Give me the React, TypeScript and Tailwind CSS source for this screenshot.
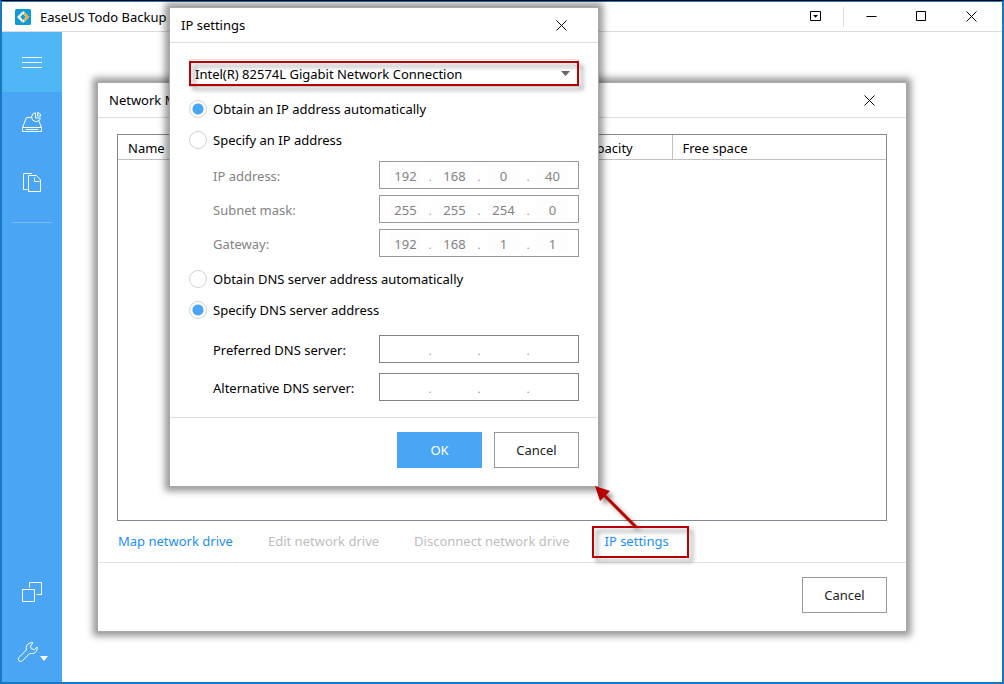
import type { ReactNode } from "react"
import clsx from "clsx"

function CloseIcon() {
  return (
    <svg className="h-[11px] w-[11px]" viewBox="0 0 11 11" fill="none" stroke="currentColor">
      <path d="M.5 .5l10 10M10.5 .5l-10 10" />
    </svg>
  )
}

function Logo() {
  return (
    <svg className="h-4 w-4" viewBox="0 0 16 16">
      <rect width="16" height="16" rx="1.5" fill="#0e9bd2" />
      <path d="M7.500 2.500L2 8l5.500 5.500V10.300L5.200 8l2.300-2.300z" fill="#fff" />
      <path d="M7.500 2.500L9 2.500 14 8l-5 5.500H7.500L7.500 11.500 11 8 7.500 4.500z" fill="#fff" />
      <path d="M9 3L14 8l-5 5v-2.800L11.200 8 9 5.800z" fill="#f6a623" />
    </svg>
  )
}

function WindowButton({ label, className, children }: { label: string; className?: string; children: ReactNode }) {
  return (
    <button type="button" aria-label={label} className={clsx("flex h-full items-center justify-center", className)}>
      {children}
    </button>
  )
}

function TitleBar() {
  return (
    <header className="flex h-[31px] items-center border-t border-b border-t-[#1c7cc9] border-b-[#dcdcdc] bg-white pr-[6px] pl-[13px]">
      <Logo />
      <h1 className="ml-[9px] flex-1">EaseUS Todo Backup</h1>
      <WindowButton label="Minimize to tray" className="w-[55px]">
        <svg className="h-[11px] w-[11px]" viewBox="0 0 11 11" fill="none" stroke="currentColor">
          <path d="M.5 .5h10v9h-10z" />
          <path d="M3 4h5L5.500 6.800z" fill="currentColor" stroke="none" />
        </svg>
      </WindowButton>
      <div className="h-5 w-px bg-[#dcdcdc]" />
      <WindowButton label="Minimize" className="ml-[2px] w-[50px]">
        <svg className="h-[11px] w-[11px]" viewBox="0 0 11 11" stroke="currentColor">
          <path d="M.5 5.500h10" />
        </svg>
      </WindowButton>
      <WindowButton label="Maximize" className="w-[50px]">
        <svg className="h-[11px] w-[11px]" viewBox="0 0 11 11" fill="none" stroke="currentColor">
          <path d="M.5 .5h9v9h-9z" />
        </svg>
      </WindowButton>
      <WindowButton label="Close" className="w-[50px]">
        <CloseIcon />
      </WindowButton>
    </header>
  )
}

function SidebarButton({ label, className, children }: { label: string; className?: string; children: ReactNode }) {
  return (
    <button type="button" aria-label={label} className={clsx("flex h-[60px] w-full items-center justify-center", className)}>
      {children}
    </button>
  )
}

function Sidebar() {
  return (
    <nav className="flex w-[60px] shrink-0 flex-col bg-[#4aa5f5] text-white">
      <SidebarButton label="Menu" className="bg-[#50b7f6]">
        <svg className="h-5 w-5" viewBox="0 0 20 20" stroke="currentColor">
          <path d="M0 5.500h20M0 10.500h20M0 15.500h20" />
        </svg>
      </SidebarButton>
      <SidebarButton label="Disk backup">
        <svg className="h-5 w-5" viewBox="0 0 20 20" fill="none" stroke="currentColor">
          <path d="M9 5.500H4.500L.5 15.500h19l-3-7.500" />
          <path d="M.5 15.500v4h19v-4M4 17.500h12" />
          <path d="M13.500 .7a4.400 4.400 0 1 0 4.800 5.300h-4.800z" />
          <path d="M15.500 .5v3.500h3.300a3.700 3.700 0 0 0-3.300-3.500z" />
        </svg>
      </SidebarButton>
      <SidebarButton label="File backup">
        <svg className="h-5 w-5" viewBox="0 0 20 20" fill="none" stroke="currentColor">
          <path d="M10 1.500H1.500v16h4" />
          <path d="M6.500 3.500h8l4 4.500v11.500h-12z" />
          <path d="M12.500 5.500v4h5" />
        </svg>
      </SidebarButton>
      <hr className="mx-[10px] mt-[10px] border-[#7cbdf7]" />
      <div className="mt-auto">
        <SidebarButton label="Clone">
          <svg className="h-5 w-5" viewBox="0 0 20 20" fill="none" stroke="currentColor">
            <path d="M.5 7.500h12v12H.5z" />
            <path d="M7.500 5.500v-5h12v12h-5" />
          </svg>
        </SidebarButton>
        <SidebarButton label="Tools">
          <svg className="ml-1 h-5 w-8" viewBox="0 0 32 20" fill="none" stroke="currentColor">
            <path
              strokeLinejoin="round"
              d="M15 .8a5.600 5.600 0 0 0-6.600 7.200L1 15.400a2.200 2.200 0 0 0 3.400 3.400L11.800 11.400A5.600 5.600 0 0 0 19.200 5l-3 2.600-3-.8-.7-2.800z"
            />
            <path d="M22 14h8l-4 5z" fill="currentColor" stroke="none" />
          </svg>
        </SidebarButton>
      </div>
    </nav>
  )
}

function DialogHeader({ title }: { title: string }) {
  return (
    <div className="flex h-[35px] items-center justify-between border-b border-[#dcdcdc] pr-[31px] pl-[11px]">
      <h2>{title}</h2>
      <button type="button" aria-label={`Close ${title}`}>
        <CloseIcon />
      </button>
    </div>
  )
}

function DialogButton({ primary, children }: { primary?: boolean; children: ReactNode }) {
  return (
    <button
      type="button"
      className={clsx("h-9 w-[85px] border", primary ? "border-[#4aa5f5] bg-[#4aa5f5] text-white" : "border-[#999] bg-white text-[#222]")}
    >
      {children}
    </button>
  )
}

// Red frame and arrow that point from the link to the dialog it opens
function Callout() {
  return (
    <span className="pointer-events-none absolute -top-[6px] -right-5 -left-3 z-20 h-8 border-2 border-[#b90000] drop-shadow-[4px_4px_2px_rgba(0,0,0,0.4)]">
      <svg className="absolute bottom-full left-0 h-[42px] w-12" viewBox="0 0 48 42">
        <path d="M8 7L43 42" stroke="#b90000" strokeWidth="3" fill="none" />
        <path d="M1 0L16 5L6 15z" fill="#b90000" />
      </svg>
    </span>
  )
}

function NetworkDialog() {
  return (
    <section className="flex flex-1 flex-col border border-[#a8a8a8] bg-white shadow-[0_0_7px_4px_rgba(0,0,0,0.42)]">
      <DialogHeader title="Network Manager" />
      <div className="mx-[19px] mt-4 flex-1 border border-[#828790]">
        <table className="w-full table-fixed border-collapse text-left">
          <thead>
            <tr className="h-6 border-b border-[#c0c0c0]">
              <th className="pt-[2px] pl-[10px] font-normal">Name</th>
              <th className="w-[103px] border-r border-[#c0c0c0] pt-[2px] pl-[12px] font-normal">Capacity</th>
              <th className="w-[214px] pt-[2px] pl-[10px] font-normal">Free space</th>
            </tr>
          </thead>
        </table>
      </div>
      <div className="flex h-[41px] items-center gap-[35px] px-5 pb-[2px] text-[#bdbdbd]">
        <a href="#map" className="text-[#1a8ffb]">Map network drive</a>
        <a href="#edit" aria-disabled="true">Edit network drive</a>
        <a href="#disconnect" aria-disabled="true">Disconnect network drive</a>
        <a href="#ip" className="relative text-[#1a8ffb]">
          IP settings
          <Callout />
        </a>
      </div>
      <div className="flex justify-end border-t border-[#dce3e8] px-[19px] pt-[14px] pb-[18px]">
        <DialogButton>Cancel</DialogButton>
      </div>
    </section>
  )
}

interface RadioProps {
  name: string
  label: string
  checked?: boolean
}

function Radio({ name, label, checked }: RadioProps) {
  return (
    <label className="flex h-[31px] items-center gap-[6px]">
      <input
        type="radio"
        name={name}
        defaultChecked={checked}
        className="h-[18px] w-[18px] appearance-none rounded-full border border-[#d2d2d2] bg-white checked:bg-[radial-gradient(circle,#4aa5f5_5px,transparent_6px)]"
      />
      {label}
    </label>
  )
}

interface AddressFieldProps {
  label: string
  octets?: string[]
  disabled?: boolean
}

function AddressField({ label, octets = ["", "", "", ""], disabled }: AddressFieldProps) {
  return (
    <div
      role="group"
      aria-label={label}
      className={clsx("flex h-7 items-center justify-between pl-6", disabled && "text-[#838383]")}
    >
      <span className="pt-[2px]">{label}</span>
      <div className={clsx("flex h-full w-[200px] items-center justify-center border", disabled ? "border-[#999]" : "border-[#828282]")}>
        {octets.map((octet, i) => (
          <div key={i} className="flex shrink-0 items-center">
            {i > 0 && <span className="w-[18px] pt-1 text-center text-[10px] text-[#838383]">.</span>}
            <input
              type="text"
              aria-label={`${label} ${i + 1}`}
              defaultValue={octet}
              disabled={disabled}
              className={clsx("h-5 w-[31px] pt-[2px] text-center", disabled && "bg-[#fdfdfd]")}
            />
          </div>
        ))}
      </div>
    </div>
  )
}

function IpDialog() {
  return (
    <section className="absolute top-[6px] left-[167px] z-10 w-[430px] border border-[#a8a8a8] bg-white shadow-[0_0_7px_4px_rgba(0,0,0,0.42)]">
      <DialogHeader title="IP settings" />
      <div className="px-[19px] pt-4 pb-4">
        <div className="relative">
          <select aria-label="Network adapter" className="h-7 w-full appearance-none border border-[#dcdcdc] pt-[2px] pl-[5px]">
            <option>Intel(R) 82574L Gigabit Network Connection</option>
          </select>
          <svg className="absolute top-3 right-[9px] h-[5px] w-[9px]" viewBox="0 0 9 5">
            <path d="M0 0h9L4.500 5z" fill="#666" />
          </svg>
          <span className="pointer-events-none absolute inset-x-0 top-[2px] h-[25px] border-2 border-[#b90000] drop-shadow-[4px_4px_2px_rgba(0,0,0,0.4)]" />
        </div>
        <div className="mt-[6px]">
          <Radio name="ip" label="Obtain an IP address automatically" checked />
          <Radio name="ip" label="Specify an IP address" />
        </div>
        <div className="mt-[6px] flex flex-col gap-[6px]">
          <AddressField label="IP address:" octets={["192", "168", "0", "40"]} disabled />
          <AddressField label="Subnet mask:" octets={["255", "255", "254", "0"]} disabled />
          <AddressField label="Gateway:" octets={["192", "168", "1", "1"]} disabled />
        </div>
        <div className="mt-[6px]">
          <Radio name="dns" label="Obtain DNS server address automatically" />
          <Radio name="dns" label="Specify DNS server address" checked />
        </div>
        <div className="mt-[10px] flex flex-col gap-[10px]">
          <AddressField label="Preferred DNS server:" />
          <AddressField label="Alternative DNS server:" />
        </div>
      </div>
      <div className="flex justify-end gap-3 border-t border-[#dcdcdc] px-[19px] pt-[14px] pb-[18px]">
        <DialogButton primary>OK</DialogButton>
        <DialogButton>Cancel</DialogButton>
      </div>
    </section>
  )
}

export default function App() {
  return (
    <div className="relative flex min-h-screen flex-col border-x-2 border-t border-b-2 border-x-[#1878c2] border-t-black border-b-[#1878c2] bg-white font-['Noto_Sans','Open_Sans',sans-serif] text-[13px] leading-[18px] text-black">
      <TitleBar />
      <div className="flex flex-1">
        <Sidebar />
        <main className="flex flex-1 py-[50px] pr-[95px] pl-[35px]">
          <NetworkDialog />
        </main>
      </div>
      <IpDialog />
    </div>
  )
}
